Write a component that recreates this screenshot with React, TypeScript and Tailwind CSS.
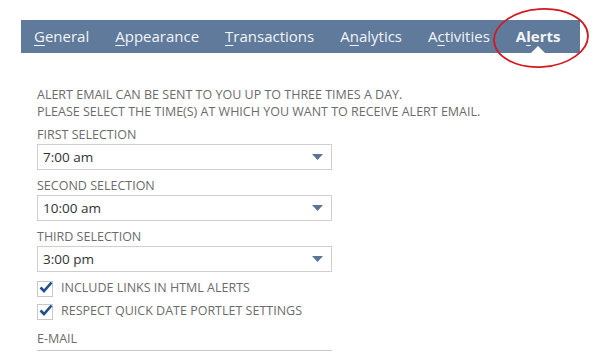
import React from 'react';

const tabs: { pre: string; key: string; post: string; active?: boolean }[] = [
  { pre: '', key: 'G', post: 'eneral' },
  { pre: '', key: 'A', post: 'ppearance' },
  { pre: '', key: 'T', post: 'ransactions' },
  { pre: 'A', key: 'n', post: 'alytics' },
  { pre: 'A', key: 'c', post: 'tivities' },
  { pre: 'A', key: 'l', post: 'erts', active: true },
];

function Select({ label, value }: { label: string; value: string }) {
  return (
    <div className="flex flex-col">
      <div className="h-[20px] pt-[3px] text-[12.5px] leading-[16px] text-[#6b6b6b]">{label}</div>
      <div className="flex h-[26px] w-[295px] items-center justify-between border border-[#cfcfcf] bg-white pl-[5px] pr-[8px]">
        <span className="text-[13.5px] text-[#333]">{value}</span>
        <svg width="11" height="6" viewBox="0 0 11 6">
          <path d="M0 0 L11 0 L5.5 6 Z" fill="#5a7597" />
        </svg>
      </div>
    </div>
  );
}

function Check({ label }: { label: string }) {
  return (
    <div className="flex h-[23px] items-center gap-[8px]">
      <div className="relative h-[16px] w-[16px] border border-[#c8c8c8] bg-white">
        <svg className="absolute -top-[2px] left-[1px]" width="14" height="14" viewBox="0 0 14 14">
          <path d="M1.5 7.5 L5 11 L12.5 2.5" stroke="#1f4f8f" strokeWidth="2.6" fill="none" />
        </svg>
      </div>
      <span className="text-[12.5px] text-[#6b6b6b]">{label}</span>
    </div>
  );
}

export default function App() {
  return (
    <div
      className="relative h-[363px] w-[607px] overflow-hidden bg-white"
      style={{ fontFamily: '"Open Sans", "Noto Sans", sans-serif' }}
    >
      <div className="pl-[21px] pt-[20px]">
        <div className="flex h-[33px] w-[559px] items-center gap-[26px] bg-[#5f7a9a] pl-[13px]">
          {tabs.map((t) => (
            <div
              key={t.post}
              className={`relative flex h-full items-center text-[15px] text-[#f2f4f7] ${t.active ? 'font-bold' : ''}`}
            >
              <span>
                {t.pre}
                <span className="underline underline-offset-[3px] decoration-1">{t.key}</span>
                {t.post}
              </span>
              {t.active && (
                <div className="absolute bottom-0 left-1/2 -translate-x-1/2 border-x-[7px] border-b-[7px] border-x-transparent border-b-white" />
              )}
            </div>
          ))}
        </div>
      </div>

      <div className="flex flex-col pl-[37px] pt-[33px]">
        <div className="text-[12.5px] leading-[17px] text-[#6b6b6b]">
          <div>ALERT EMAIL CAN BE SENT TO YOU UP TO THREE TIMES A DAY.</div>
          <div>PLEASE SELECT THE TIME(S) AT WHICH YOU WANT TO RECEIVE ALERT EMAIL.</div>
        </div>
        <div className="mt-[4px] flex flex-col gap-[5px]">
          <Select label="FIRST SELECTION" value="7:00 am" />
          <Select label="SECOND SELECTION" value="10:00 am" />
          <Select label="THIRD SELECTION" value="3:00 pm" />
        </div>
        <div className="mt-[5px] flex flex-col">
          <Check label="INCLUDE LINKS IN HTML ALERTS" />
          <Check label="RESPECT QUICK DATE PORTLET SETTINGS" />
        </div>
        <div className="mt-[7px] w-[295px] border-b border-[#c8c8c8] pb-[1px] text-[12.5px] text-[#6b6b6b]">
          E-MAIL
        </div>
      </div>

      <svg className="absolute left-0 top-0" width="607" height="363" viewBox="0 0 607 363">
        <ellipse cx="541" cy="38" rx="47" ry="29" fill="none" stroke="#d41820" strokeWidth="1.8" transform="rotate(-4 541 38)" />
      </svg>
    </div>
  );
}
